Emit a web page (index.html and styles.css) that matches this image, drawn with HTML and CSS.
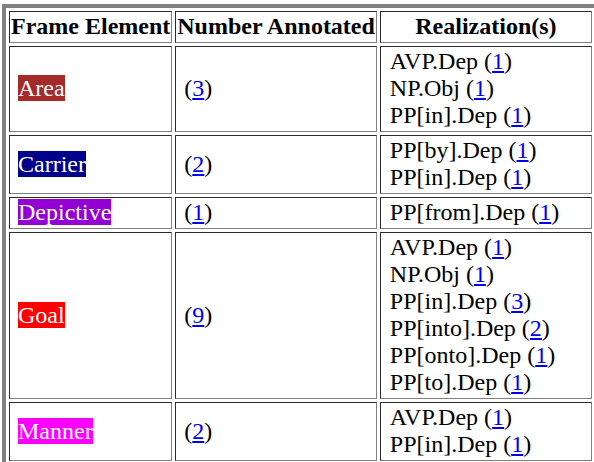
FILE: index.html
```html
<!DOCTYPE html>
<html>
<head>
<meta charset="utf-8">
<link rel="stylesheet" href="styles.css">
</head>
<body>
<table class="fe-table">
  <tr>
    <th>Frame Element</th>
    <th>Number Annotated</th>
    <th class="wide">Realization(s)</th>
  </tr>
  <tr>
    <td class="fe-cell"><span class="fe fe-area">Area</span></td>
    <td class="num">(<a href="#">3</a>)</td>
    <td class="reals"><div>AVP.Dep (<a href="#">1</a>)</div><div>NP.Obj (<a href="#">1</a>)</div><div>PP[in].Dep (<a href="#">1</a>)</div></td>
  </tr>
  <tr>
    <td class="fe-cell"><span class="fe fe-carrier">Carrier</span></td>
    <td class="num">(<a href="#">2</a>)</td>
    <td class="reals"><div>PP[by].Dep (<a href="#">1</a>)</div><div>PP[in].Dep (<a href="#">1</a>)</div></td>
  </tr>
  <tr>
    <td class="fe-cell"><span class="fe fe-depictive">Depictive</span></td>
    <td class="num">(<a href="#">1</a>)</td>
    <td class="reals"><div>PP[from].Dep (<a href="#">1</a>)</div></td>
  </tr>
  <tr>
    <td class="fe-cell"><span class="fe fe-goal">Goal</span></td>
    <td class="num">(<a href="#">9</a>)</td>
    <td class="reals"><div>AVP.Dep (<a href="#">1</a>)</div><div>NP.Obj (<a href="#">1</a>)</div><div>PP[in].Dep (<a href="#">3</a>)</div><div>PP[into].Dep (<a href="#">2</a>)</div><div>PP[onto].Dep (<a href="#">1</a>)</div><div>PP[to].Dep (<a href="#">1</a>)</div></td>
  </tr>
  <tr>
    <td class="fe-cell"><span class="fe fe-manner">Manner</span></td>
    <td class="num">(<a href="#">2</a>)</td>
    <td class="reals"><div>AVP.Dep (<a href="#">1</a>)</div><div>PP[in].Dep (<a href="#">1</a>)</div></td>
  </tr>
</table>
</body>
</html>
```
FILE: styles.css
```css
html, body {
  margin: 0;
  padding: 0;
  overflow: hidden;
  background: #ffffff;
}
body {
  padding: 4px 0 0 2px;
  font-family: "Liberation Serif", "Times New Roman", serif;
  font-size: 24px;
  color: #000000;
}
.fe-table {
  border: 4px outset #808080;
  border-spacing: 3px;
  border-collapse: separate;
  width: 597px;
  font-family: "Liberation Serif", "Times New Roman", serif;
  font-size: 24px;
}
.fe-table th,
.fe-table td {
  border: 1px inset #808080;
  padding: 1px 1px 2px 1px;
  line-height: 27px;
  vertical-align: middle;
  text-align: left;
  white-space: nowrap;
}
.fe-table th {
  font-weight: bold;
  text-align: center;
  padding: 1px 1px 2px 1px;
}
.fe-table th.wide {
  width: 100%;
}
.fe-table td.fe-cell {
  padding-left: 8px;
}
.fe-table td.num {
  padding-left: 8px;
}
.fe-table td.reals {
  padding-left: 9px;
}
a {
  color: #0000ee;
  text-decoration: underline;
}
.fe {
  color: #ffffff;
}
.fe-area { background: #a52a2a; }
.fe-carrier { background: #00008b; }
.fe-depictive { background: #9400d3; }
.fe-goal { background: #ff0000; }
.fe-manner { background: #ff00ff; }
```
